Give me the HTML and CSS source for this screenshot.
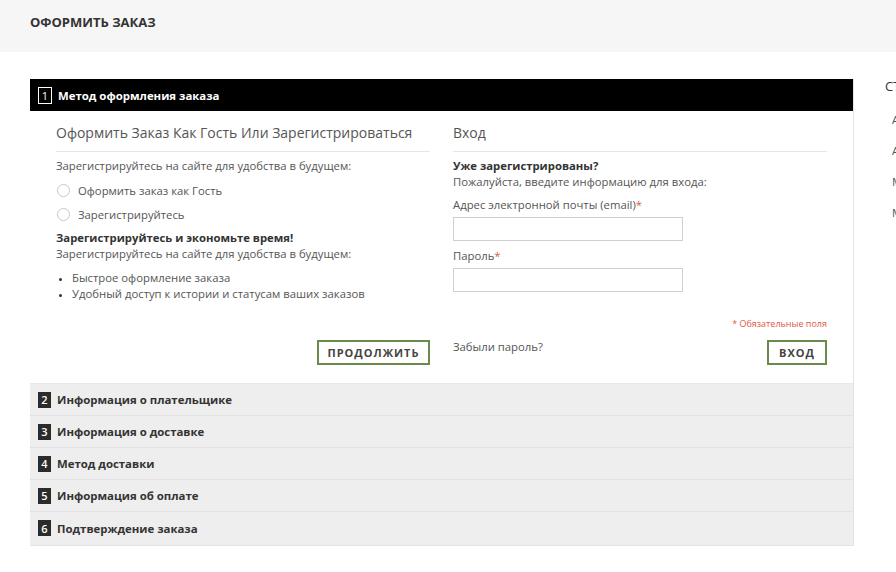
FILE: index.html
```html
<!DOCTYPE html>
<html lang="ru">
<head>
<meta charset="utf-8">
<title>Оформить заказ</title>
<link rel="stylesheet" href="styles.css">
</head>
<body>
<header class="page-head">
  <h1 class="page-title">ОФОРМИТЬ ЗАКАЗ</h1>
</header>
<main class="main">
  <section class="checkout">
    <div class="step step-active">
      <div class="step-title active"><span class="num num-outline">1</span>Метод оформления заказа</div>
      <div class="step-body">
        <div class="col">
          <h3 class="col-title">Оформить Заказ Как Гость Или Зарегистрироваться</h3>
          <p class="txt">Зарегистрируйтесь на сайте для удобства в будущем:</p>
          <label class="radio-row"><span class="radio"></span>Оформить заказ как Гость</label>
          <label class="radio-row"><span class="radio"></span>Зарегистрируйтесь</label>
          <p class="txt strong mt">Зарегистрируйтесь и экономьте время!</p>
          <p class="txt">Зарегистрируйтесь на сайте для удобства в будущем:</p>
          <ul class="bullets">
            <li>Быстрое оформление заказа</li>
            <li>Удобный доступ к истории и статусам ваших заказов</li>
          </ul>
          <div class="actions actions-right">
            <button class="btn btn-wide">ПРОДОЛЖИТЬ</button>
          </div>
        </div>
        <div class="col">
          <h3 class="col-title">Вход</h3>
          <p class="txt strong">Уже зарегистрированы?</p>
          <p class="txt">Пожалуйста, введите информацию для входа:</p>
          <label class="field-label">Адрес электронной почты (email)<em>*</em></label>
          <input class="input" type="text">
          <label class="field-label">Пароль<em>*</em></label>
          <input class="input" type="password">
          <p class="required">* Обязательные поля</p>
          <div class="actions actions-split">
            <a class="forgot">Забыли пароль?</a>
            <button class="btn btn-narrow">ВХОД</button>
          </div>
        </div>
      </div>
    </div>
    <div class="step"><div class="step-title"><span class="num">2</span>Информация о плательщике</div></div>
    <div class="step"><div class="step-title"><span class="num">3</span>Информация о доставке</div></div>
    <div class="step"><div class="step-title"><span class="num">4</span>Метод доставки</div></div>
    <div class="step"><div class="step-title"><span class="num">5</span>Информация об оплате</div></div>
    <div class="step step-last"><div class="step-title"><span class="num">6</span>Подтверждение заказа</div></div>
  </section>
  <aside class="sidebar">
    <h2 class="side-title">СТАТУС ОФОРМЛЕНИЯ</h2>
    <ul class="side-list">
      <li>Адрес плательщика</li>
      <li>Адрес доставки</li>
      <li>Метод доставки</li>
      <li>Метод оплаты</li>
    </ul>
  </aside>
</main>
</body>
</html>
```
FILE: styles.css
```css
html, body {
  margin: 0;
  padding: 0;
}
body {
  width: 896px;
  height: 572px;
  overflow: hidden;
  background: #fff;
  font-family: "Open Sans", "Noto Sans", sans-serif;
  color: #555;
  font-size: 11.3px;
}
.page-head {
  background: #f6f6f6;
  height: 52px;
  padding-left: 30px;
  display: flex;
  align-items: center;
}
.page-title {
  margin: 0;
  margin-top: -8px;
  font-size: 13px;
  font-weight: 700;
  color: #333;
}
.main {
  display: flex;
  padding: 27px 0 0 30px;
  gap: 31px;
}
.checkout {
  flex: 0 0 824px;
  width: 824px;
  border-right: 1px solid #e4e4e4;
  box-sizing: border-box;
}
.step-title {
  height: 32px;
  display: flex;
  align-items: center;
  padding-left: 8px;
  background: #eeeeee;
  border-bottom: 1px solid #e2e2e2;
  box-sizing: border-box;
  font-weight: 700;
  font-size: 11.4px;
  color: #333;
}
.step-last .step-title {
  height: 34px;
  padding-bottom: 1px;
}
.step-title.active {
  background: #000;
  color: #fff;
  border-bottom: none;
}
.num {
  display: inline-flex;
  align-items: center;
  justify-content: center;
  width: 13px;
  height: 16px;
  margin-right: 6px;
  background: #2b2b2b;
  color: #fff;
  font-size: 11px;
  font-weight: 600;
}
.num-outline {
  background: transparent;
  border: 1px solid #fff;
  width: 12px;
  height: 15px;
  font-weight: 400;
}
.step-body {
  display: flex;
  gap: 23px;
  padding: 12px 26px 18px 26px;
  border-bottom: 1px solid #e8e8e8;
}
.col {
  flex: 1;
  display: flex;
  flex-direction: column;
}
.col-title {
  margin: 0 0 6px;
  padding-bottom: 8px;
  border-bottom: 1px solid #e6e6e6;
  font-size: 14px;
  line-height: 20px;
  font-weight: 400;
  color: #555;
}
.txt {
  margin: 0;
  line-height: 16px;
}
.strong {
  font-weight: 700;
  color: #333;
}
.mt {
  margin-top: 4px;
}
.radio-row {
  display: flex;
  align-items: center;
  height: 24px;
  padding-left: 1px;
}
.radio-row:first-of-type {
  margin-top: 4px;
}
.radio {
  width: 11px;
  height: 11px;
  border: 1px solid #c8c8c8;
  border-radius: 50%;
  margin-right: 8px;
  background: #fff;
}
.bullets {
  margin: 8px 0 0;
  padding-left: 16px;
  line-height: 16px;
  list-style: disc;
}
.bullets li::marker {
  color: #333;
  font-size: 9px;
}
.actions {
  display: flex;
  margin-top: auto;
}
.actions-right {
  justify-content: flex-end;
}
.actions-split {
  justify-content: space-between;
  align-items: flex-start;
}
.btn {
  height: 25px;
  background: #fff;
  border: 2px solid #6a8a4c;
  box-sizing: border-box;
  font-family: "Open Sans", "Noto Sans", sans-serif;
  font-size: 11px;
  font-weight: 700;
  letter-spacing: 1px;
  color: #444;
  padding: 0;
  cursor: pointer;
}
.btn-wide {
  width: 113px;
}
.btn-narrow {
  width: 60px;
}
.field-label {
  margin-top: 7px;
  line-height: 16px;
}
.field-label em {
  color: #e0574a;
  font-style: normal;
}
.input {
  margin-top: 4px;
  width: 230px;
  height: 24px;
  box-sizing: border-box;
  border: 1px solid #cfcfcf;
  background: #fff;
  padding: 0 4px;
}
.required {
  margin: 25px 0 0;
  text-align: right;
  font-size: 9px;
  line-height: 14px;
  color: #e0574a;
}
.actions-split {
  margin-top: 9px;
}
.forgot {
  color: #555;
  line-height: 16px;
  margin-top: -1px;
}
.sidebar {
  flex: 0 0 200px;
}
.side-title {
  margin: 0;
  margin-top: -1px;
  font-size: 13px;
  font-weight: 400;
  color: #333;
  line-height: 16px;
  white-space: nowrap;
}
.side-list {
  list-style: none;
  margin: 10px 0 0;
  padding: 0 0 0 7px;
  line-height: 31px;
  color: #555;
  white-space: nowrap;
}
```
